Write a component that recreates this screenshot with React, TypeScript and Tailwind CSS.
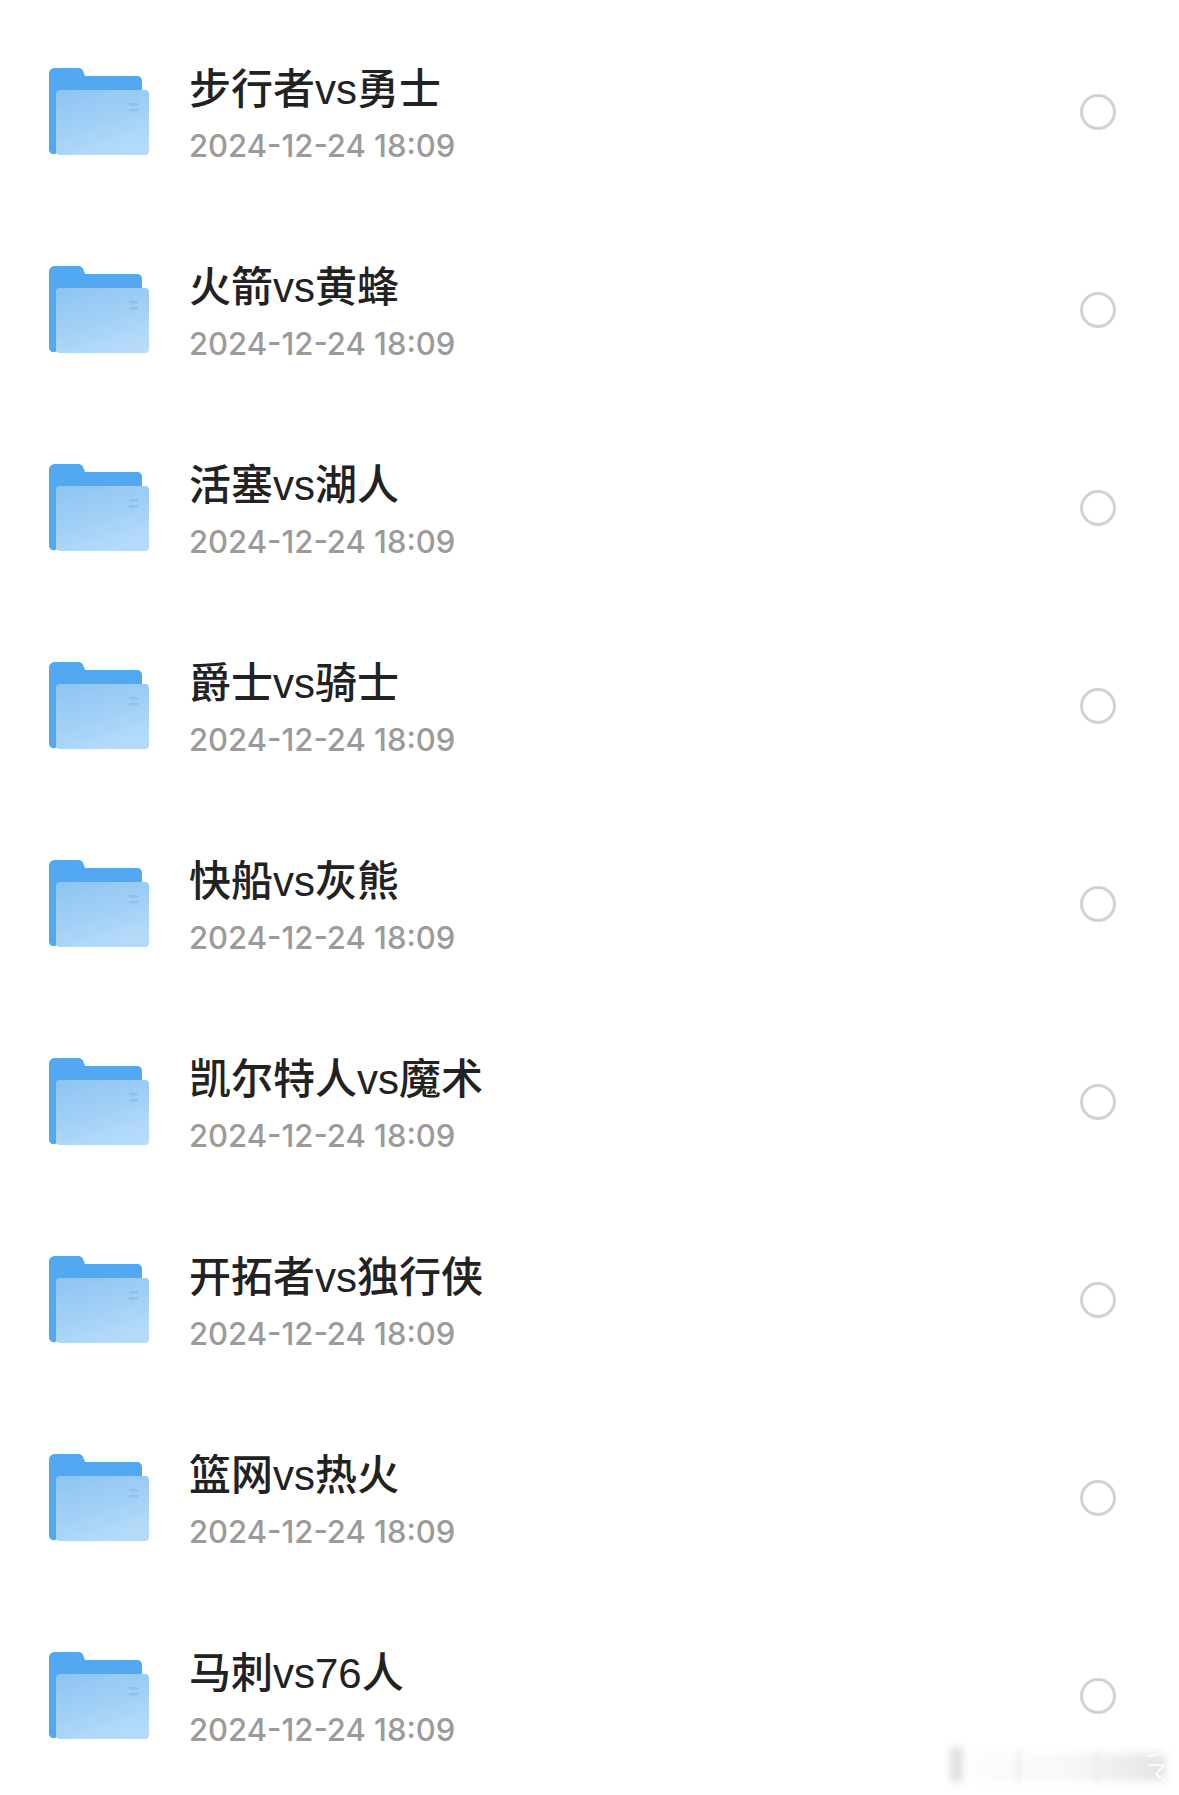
const MATCHES = [
  "步行者vs勇士",
  "火箭vs黄蜂",
  "活塞vs湖人",
  "爵士vs骑士",
  "快船vs灰熊",
  "凯尔特人vs魔术",
  "开拓者vs独行侠",
  "篮网vs热火",
  "马刺vs76人",
];

function FolderIcon({ id }: { id: number }) {
  return (
    <svg width="100" height="88" viewBox="0 0 100 88" className="shrink-0">
      <defs>
        <linearGradient id={`front-${id}`} x1="0.1" y1="0" x2="0.55" y2="1">
          <stop offset="0" stopColor="#8fc5f3" />
          <stop offset="0.55" stopColor="#a1d0f6" />
          <stop offset="1" stopColor="#b6dbfa" />
        </linearGradient>
      </defs>
      <path
        d="M6 0H29C32 0 33.5 1.5 34.5 4L36 8H88C91 8 93 10 93 13V30H8V85C3 88 0 85 0 81V6C0 2.5 2.5 0 6 0Z"
        fill="#53a9f1"
      />
      <rect x="7" y="22" width="93" height="65" rx="4" fill={`url(#front-${id})`} />
      <rect x="80" y="35" width="9" height="2.5" rx="1" fill="#8bc1ee" />
      <rect x="80" y="41" width="9" height="2.5" rx="1" fill="#8bc1ee" />
    </svg>
  );
}

function MatchRow({ title, id }: { title: string; id: number }) {
  return (
    <div className="flex h-[198px] items-center pl-[49px] pr-[63px]">
      <FolderIcon id={id} />
      <div className="ml-[40px] flex flex-1 flex-col pt-[3px]">
        <div className="text-[42px] font-medium leading-[56px] text-[#222222]">{title}</div>
        <div className="mt-[8px] font-['Inter',sans-serif] text-[31px] font-medium leading-[40px] text-[#9b9b9b]">
          2024-12-24 18:09
        </div>
      </div>
      <div className="h-[36px] w-[36px] rounded-full border-[3px] border-[#d2d2d2]" />
    </div>
  );
}

export default function App() {
  return (
    <div className="relative h-[1795px] w-[1179px] overflow-hidden bg-white pt-[13px] font-['Liberation_Sans','Noto_Sans_CJK_SC',sans-serif]">
      {MATCHES.map((title, i) => (
        <MatchRow key={title} title={title} id={i} />
      ))}
      {/* blurred watermark, bottom right */}
      <div className="absolute left-[951px] top-[1747px] h-[35px] w-[11px] bg-[#dadada] blur-[4px]" />
      <div className="absolute left-[975px] top-[1753px] h-[28px] w-[190px] bg-gradient-to-r from-[#fcfcfc] via-[#f8f8f8] to-[#e4e4e4] blur-[4px]" />
      <div className="absolute left-[1017px] top-[1750px] h-[32px] w-[4px] bg-[#f0f0f0] blur-[2px]" />
      <div className="absolute left-[1095px] top-[1752px] h-[30px] w-[4px] bg-[#eeeeee] blur-[2px]" />
      <svg width="24" height="34" viewBox="0 0 24 34" className="absolute left-[1146px] top-[1750px]">
        <path d="M2 6L19 3M2 15H18L10 24L19 31" fill="none" stroke="#ffffff" strokeWidth="1.5" />
      </svg>
    </div>
  );
}
